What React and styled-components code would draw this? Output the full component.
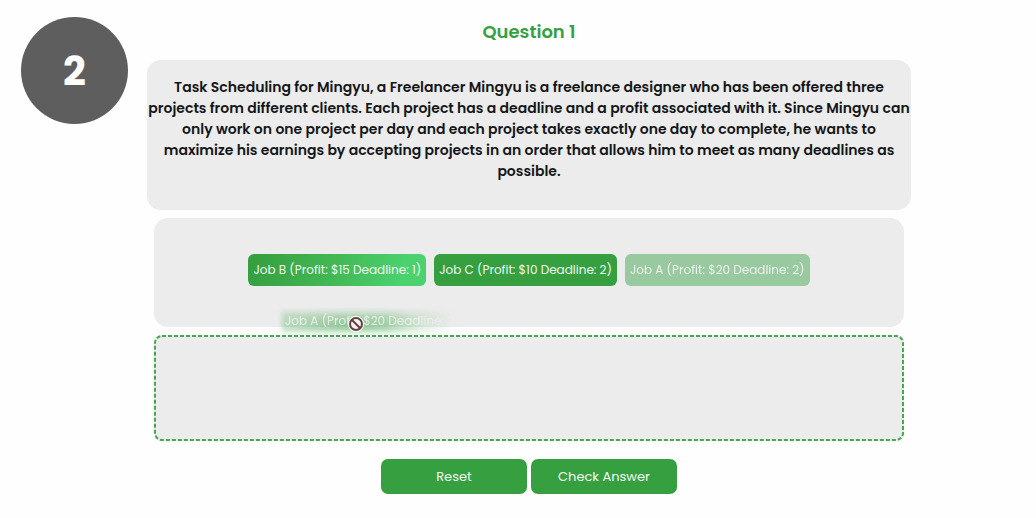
import React from 'react';
import styled, { createGlobalStyle } from 'styled-components';

const GlobalStyle = createGlobalStyle`
  * { box-sizing: border-box; }
  body {
    margin: 0;
    background: #fefefe;
    font-family: Poppins, Inter, "Open Sans", sans-serif;
  }
`;

const Page = styled.div`
  display: grid;
  grid-template-columns: 147px minmax(0, 1fr) 125px;
`;

const StepBadge = styled.div`
  display: flex;
  align-items: center;
  justify-content: center;
  width: 107px;
  height: 107px;
  margin: 17px 0 0 21px;
  border-radius: 50%;
  background: #5f5e5e;
  color: #fff;
  font-size: 40px;
  font-weight: 700;
`;

const Quiz = styled.main`
  display: flex;
  flex-direction: column;
  gap: 8px;
  padding-top: 18px;
`;

const Title = styled.h1`
  margin: 0 0 6px;
  color: #36a041;
  font-size: 18px;
  font-weight: 600;
  line-height: 28px;
  text-align: center;
`;

const Question = styled.p`
  min-height: 150px;
  margin: 0;
  padding: 17px 0;
  border-radius: 14px;
  background: #ececec;
  color: #141618;
  font-size: 14px;
  font-weight: 600;
  line-height: 21px;
  text-align: center;
`;

const JobPool = styled.section`
  position: relative;
  display: flex;
  flex-wrap: wrap;
  align-items: center;
  justify-content: center;
  gap: 8px;
  min-height: 109px;
  margin: 0 7px;
  padding: 4px 8px 10px;
  border-radius: 14px;
  background: #ececec;
`;

const Job = styled.button`
  height: 32px;
  padding: 0 5px;
  border: 0;
  border-radius: 6px;
  background: ${({ $hovered }) =>
    $hovered ? 'linear-gradient(105deg, #36a041 5%, #43b956 50%, #4bd16e 85%)' : '#36a041'};
  color: #eef8ef;
  font: inherit;
  font-size: 12px;
  white-space: nowrap;
  opacity: ${({ $dragged }) => ($dragged ? 0.45 : 1)};
`;

const DragGhost = styled.div`
  position: absolute;
  top: 89px;
  left: 124px;
  z-index: 1;
  width: 180px;
  height: 29px;
  padding: 0 7px;
  border-radius: 6px 0 0 0;
  background: radial-gradient(ellipse at 42% 65%, rgba(54, 160, 65, 0.5), rgba(54, 160, 65, 0.26) 50%, rgba(54, 160, 65, 0.1) 100%);
  color: rgba(255, 255, 255, 0.65);
  font-size: 12px;
  line-height: 28px;
  white-space: nowrap;
  mask-image: linear-gradient(to right, transparent, #000 4%, #000 60%, transparent), linear-gradient(to bottom, transparent, #000 30%, #000 75%, transparent);
  mask-composite: intersect;
`;

const NoDropCursor = styled.svg`
  position: absolute;
  top: 98px;
  left: 194px;
  z-index: 2;
  width: 16px;
  height: 16px;
`;

const DropZone = styled.section`
  position: relative;
  min-height: 106px;
  margin: 0 7px;
  border-radius: 8px;
  background: #ececec;
`;

const DashedOutline = styled.svg`
  position: absolute;
  inset: 0;
  width: 100%;
  height: 100%;

  rect {
    width: calc(100% - 2px);
    height: calc(100% - 2px);
    fill: none;
    stroke: #43a94d;
    stroke-width: 2px;
    stroke-dasharray: 4 2;
  }
`;

const Actions = styled.div`
  display: flex;
  flex-wrap: wrap;
  justify-content: center;
  gap: 4px;
  padding-top: 10px;
`;

const Action = styled.button`
  width: 146px;
  height: 35px;
  border: 0;
  border-radius: 7px;
  background: #36a041;
  color: #f2f8f2;
  font: inherit;
  font-size: 13px;
`;

export default function App() {
  return (
    <>
      <GlobalStyle />
      <Page>
        <aside>
          <StepBadge>2</StepBadge>
        </aside>
        <Quiz>
          <Title>Question 1</Title>
          <Question>
            Task Scheduling for Mingyu, a Freelancer Mingyu is a freelance designer who has been
            offered three projects from different clients. Each project has a deadline and a profit
            associated with it. Since Mingyu can only work on one project per day and each project
            takes exactly one day to complete, he wants to maximize his earnings by accepting
            projects in an order that allows him to meet as many deadlines as possible.
          </Question>
          <JobPool aria-label="Available jobs">
            <Job type="button" draggable $hovered>Job B (Profit: $15 Deadline: 1)</Job>
            <Job type="button" draggable>Job C (Profit: $10 Deadline: 2)</Job>
            <Job type="button" draggable $dragged>Job A (Profit: $20 Deadline: 2)</Job>
            <DragGhost aria-hidden="true">Job A (Profit: $20 Deadline: 2)</DragGhost>
            <NoDropCursor viewBox="0 0 16 16" aria-hidden="true">
              <circle cx="8" cy="8" r="6" fill="none" stroke="#fff" strokeWidth="4" />
              <circle cx="8" cy="8" r="6" fill="#f4f1f1" stroke="#643f42" strokeWidth="2" />
              <path d="M4 4l8 8" stroke="#643f42" strokeWidth="2" />
            </NoDropCursor>
          </JobPool>
          <DropZone aria-label="Answer">
            <DashedOutline aria-hidden="true">
              <rect x="1" y="1" rx="7" />
            </DashedOutline>
          </DropZone>
          <Actions>
            <Action type="button">Reset</Action>
            <Action type="button">Check Answer</Action>
          </Actions>
        </Quiz>
      </Page>
    </>
  );
}
